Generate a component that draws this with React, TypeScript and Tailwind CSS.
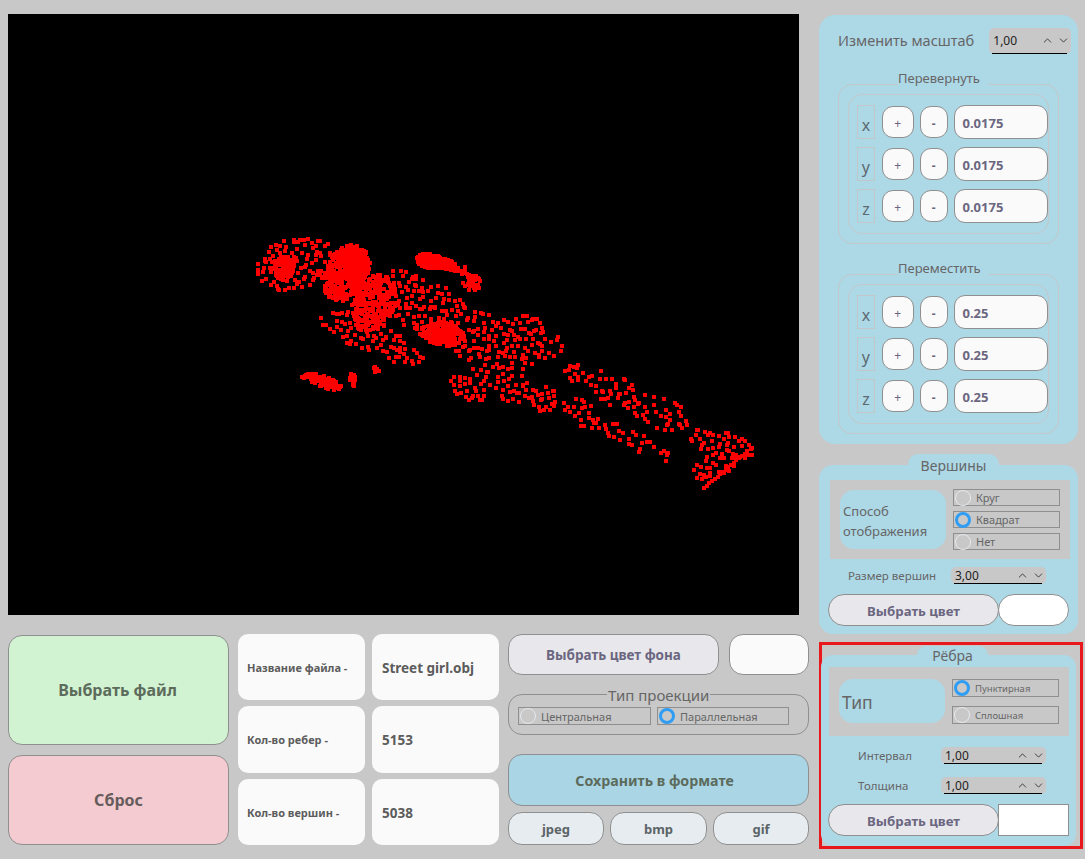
import { ChevronDown, ChevronUp } from 'lucide-react';

const FONT = 'font-["Noto_Sans",sans-serif]';

// [cx, cy, rx, ry, angle in degrees, number of points]
const BLOBS: number[][] = [
  [292, 262, 40, 26, -10, 150],
  [282, 266, 11, 12, 0, 70],
  [344, 271, 21, 30, 25, 340],
  [352, 262, 18, 16, 0, 100],
  [312, 245, 16, 7, 0, 24],
  [372, 302, 21, 30, 20, 260],
  [398, 288, 26, 20, 0, 70],
  [428, 259, 14, 8, 10, 130],
  [446, 263, 11, 5, 25, 60],
  [464, 270, 7, 5, 35, 10],
  [470, 281, 9, 8, 0, 32],
  [425, 305, 44, 26, 20, 90],
  [440, 332, 23, 12, 10, 170],
  [360, 330, 46, 16, 20, 70],
  [402, 354, 20, 9, 10, 30],
  [486, 338, 56, 26, 15, 110],
  [466, 386, 20, 12, 20, 34],
  [495, 365, 34, 20, 30, 30],
  [319, 379, 21, 6, 18, 80],
  [351, 377, 3, 8, -25, 12],
  [374, 368, 3, 5, -25, 6],
  [524, 337, 20, 24, 0, 34],
  [541, 397, 14, 13, 10, 40],
  [514, 393, 15, 9, 0, 18],
  [552, 345, 9, 15, 30, 8],
  [572, 369, 10, 10, -40, 16],
  [612, 388, 30, 16, 25, 40],
  [660, 411, 34, 17, 25, 34],
  [582, 412, 24, 12, 28, 26],
  [612, 428, 14, 9, 30, 10],
  [636, 440, 18, 10, 10, 12],
  [664, 453, 6, 8, -45, 5],
  [720, 442, 34, 13, 15, 60],
  [716, 462, 28, 12, -25, 40],
];

function buildCloud() {
  let seed = 48271;
  const rand = () => {
    seed = (seed * 16807) % 2147483647;
    return seed / 2147483647;
  };
  const taken = new Set<string>();
  const parts: string[] = [];
  for (const [cx, cy, rx, ry, deg, count] of BLOBS) {
    const a = (deg * Math.PI) / 180;
    // thin areas keep their points apart, dense ones are allowed to merge
    const sparse = count / (Math.PI * rx * ry) < 0.08;
    for (let i = 0; i < count; i++) {
      for (let attempt = 0; attempt < 6; attempt++) {
        const r = Math.sqrt(rand());
        const t = rand() * Math.PI * 2;
        const dx = Math.cos(t) * r * rx;
        const dy = Math.sin(t) * r * ry;
        const x = Math.round(cx + dx * Math.cos(a) - dy * Math.sin(a));
        const y = Math.round(cy + dx * Math.sin(a) + dy * Math.cos(a));
        const cell = `${Math.floor(x / 6)}:${Math.floor(y / 6)}`;
        if (sparse && taken.has(cell)) continue;
        taken.add(cell);
        parts.push(`M${x - 8} ${y - 14}h4v4h-4z`);
        break;
      }
    }
  }
  // ankle edge, a straight run of points
  for (let i = 0; i < 17; i++) {
    parts.push(`M${Math.round(702 + i * 2.7) - 8} ${Math.round(486 - i * 2.3) - 14}h4v4h-4z`);
  }
  return parts.join('');
}

const CLOUD = buildCloud();

function Radio({ label, checked, className, textClass }: { label: string; checked?: boolean; className: string; textClass: string }) {
  return (
    <div className={`flex items-center border border-[#8f8f8f] ${className}`}>
      <span
        className={`ml-px shrink-0 w-4 h-4 rounded-full ${checked ? 'border-[3px] border-[#2f9df4]' : 'border border-[#e6eaee]'}`}
      />
      <span className={`text-[#666] pt-[2px] ${textClass}`}>{label}</span>
    </div>
  );
}

function SpinBox({ value, className }: { value: string; className: string }) {
  return (
    <div className={`relative flex items-center justify-between bg-[#c8c8c8] rounded-[5px] pl-1 pr-[1px] ${className}`}>
      <span className="text-[12px] leading-none text-[#222]">{value}</span>
      <span className="flex items-center gap-[3px] text-[#222]">
        <ChevronUp size={13} strokeWidth={1.5} />
        <ChevronDown size={13} strokeWidth={1.5} />
      </span>
      <span className="absolute left-[3px] right-[4px] bottom-0 h-px bg-black" />
    </div>
  );
}

function AxisRow({ axis, value }: { axis: string; value: string }) {
  return (
    <div className="flex items-stretch h-[34px]">
      <div className="w-[18px] border border-[#c2c6c8] flex items-center justify-center text-[16px] text-[#5e6a72] pt-[5px]">
        {axis}
      </div>
      <button className="ml-[7px] my-px pt-[3px] w-[32px] rounded-[11px] border border-[#8f8f8f] bg-[#fafafa] text-[12px] text-[#6b6680]">
        +
      </button>
      <button className="ml-[6px] my-px pt-[3px] w-[28px] rounded-[11px] border border-[#8f8f8f] bg-[#fafafa] text-[12px] font-bold text-[#6b6680]">
        -
      </button>
      <div className="ml-[6px] w-[95px] rounded-[11px] border border-[#8f8f8f] bg-[#fafafa] flex items-center pl-[8px] pt-[3px] text-[13px] font-bold text-[#6b6680]">
        {value}
      </div>
    </div>
  );
}

function TransformGroup({ title, value }: { title: string; value: string }) {
  return (
    <div className="relative mx-[19px] h-[160px] rounded-[14px] border border-[#c4c8ca] p-[9px]">
      <span className="absolute left-[59px] -top-[16px] bg-[#add8e6] pr-[8px] h-[21px] text-[13px] leading-[18px] text-[#666]">
        {title}
      </span>
      <div className="h-full rounded-[14px] border border-[#c4c8ca] pl-[8px] pt-[10px] flex flex-col gap-[8px]">
        <AxisRow axis="x" value={value} />
        <AxisRow axis="y" value={value} />
        <AxisRow axis="z" value={value} />
      </div>
    </div>
  );
}

function InfoCell({ text, bold }: { text: string; bold?: boolean }) {
  return (
    <div
      className={`bg-[#fafafa] rounded-[10px] flex items-center pl-[9px] pt-[2px] font-bold text-[#5c5c5c] ${bold ? 'pl-[10px] text-[13.5px]' : 'text-[11px]'}`}
    >
      {text}
    </div>
  );
}

function ColorButton({ swatchClass }: { swatchClass: string }) {
  return (
    <div className="flex h-[32px] ml-[9px]">
      <button className="w-[171px] pt-[3px] rounded-[16px] border border-[#8f8f8f] bg-[#e8e8ec] text-[13.2px] font-bold text-[#6b6680]">
        Выбрать цвет
      </button>
      <div className={`w-[71px] bg-[#fff] border border-[#8f8f8f] ${swatchClass}`} />
    </div>
  );
}

export default function App() {
  return (
    <div className={`w-[1085px] h-[859px] overflow-hidden bg-[#c8c8c8] flex pl-2 ${FONT}`}>
      <div className="w-[801px] pt-[14px]">
        <div className="w-[791px] h-[601px] bg-black">
          <svg width="791" height="601" viewBox="0 0 791 601" shapeRendering="crispEdges">
            <path d={CLOUD} fill="#ff0000" />
          </svg>
        </div>

        <div className="flex mt-[19px] h-[211px]">
          <div className="w-[221px] pt-px flex flex-col gap-[10px]">
            <button className="h-[110px] pr-[2px] rounded-[14px] border border-[#8f8f8f] bg-[#d1f3d1] text-[16px] font-bold text-[#5c6b5c]">
              Выбрать файл
            </button>
            <button className="h-[90px] rounded-[14px] border border-[#8f8f8f] bg-[#f4cbd0] text-[16px] font-bold text-[#665c5c]">
              Сброс
            </button>
          </div>

          <div className="ml-[9px] w-[261px] grid grid-cols-[127px_127px] gap-x-[7px] gap-y-[6px] grid-rows-[66px_67px_66px]">
            <InfoCell text="Название файла -" />
            <InfoCell text="Street girl.obj" bold />
            <InfoCell text="Кол-во ребер -" />
            <InfoCell text="5153" bold />
            <InfoCell text="Кол-во вершин -" />
            <InfoCell text="5038" bold />
          </div>

          <div className="ml-[9px] w-[301px]">
            <div className="flex gap-[10px] h-[41px]">
              <button className="w-[211px] pt-[2px] rounded-[14px] border border-[#8f8f8f] bg-[#e8e8ec] text-[13.5px] font-bold text-[#6b6680]">
                Выбрать цвет фона
              </button>
              <div className="w-[80px] rounded-[14px] border border-[#8f8f8f] bg-[#fafafa]" />
            </div>

            <div className="relative mt-[19px] h-[41px] rounded-[14px] border border-[#8f8f8f] flex items-start pl-[9px] pt-[12px] gap-[6px]">
              <span className="absolute left-[98px] -top-[9px] bg-[#c8c8c8] px-px text-[15px] leading-[18px] text-[#666]">
                Тип проекции
              </span>
              <Radio label="Центральная" className="w-[133px] h-[18px]" textClass="ml-[5px] text-[11px]" />
              <Radio label="Параллельная" checked className="w-[132px] h-[18px]" textClass="ml-[5px] text-[11px]" />
            </div>

            <button className="mt-[19px] w-full h-[52px] pr-[8px] pt-[2px] rounded-[14px] border border-[#8f8f8f] bg-[#a9d5e5] text-[14.2px] font-bold text-[#5c6b5c]">
              Сохранить в формате
            </button>

            <div className="mt-[6px] flex gap-[6px] h-[33px]">
              <button className="w-[96px] pt-[2px] rounded-[14px] border border-[#8f8f8f] bg-[#e6ecef] text-[13px] font-bold text-[#5c6468]">
                jpeg
              </button>
              <button className="w-[97px] pt-[2px] rounded-[14px] border border-[#8f8f8f] bg-[#e6ecef] text-[13px] font-bold text-[#5c6468]">
                bmp
              </button>
              <button className="w-[96px] pt-[2px] rounded-[14px] border border-[#8f8f8f] bg-[#e6ecef] text-[13px] font-bold text-[#5c6468]">
                gif
              </button>
            </div>
          </div>
        </div>
      </div>

      <div className="ml-[10px] w-[265px] pt-[15px]">
        <div className="w-[259px] h-[429px] bg-[#add8e6] rounded-[16px] pt-[12px]">
          <div className="flex items-center h-[27px] pl-[19px]">
            <span className="text-[14.5px] text-[#666]">Изменить масштаб</span>
            <SpinBox value="1,00" className="ml-[15px] w-[82px] h-[26px]" />
          </div>
          <div className="mt-[30px]">
            <TransformGroup title="Перевернуть" value="0.0175" />
          </div>
          <div className="mt-[30px]">
            <TransformGroup title="Переместить" value="0.25" />
          </div>
        </div>

        <div className="mt-[10px] w-[259px]">
          <div className="ml-[89px] w-[91px] h-[11px] bg-[#add8e6] rounded-t-[10px] relative">
            <span className="absolute inset-x-0 top-[3px] text-center text-[14px] leading-[18px] text-[#666]">
              Вершины
            </span>
          </div>
          <div className="h-[169px] bg-[#add8e6] rounded-[14px] pt-[15px]">
            <div className="ml-[11px] w-[240px] h-[79px] bg-[#c8c8c8] flex pl-[10px] pt-[10px]">
              <div className="w-[106px] h-[59px] rounded-[14px] bg-[#add8e6] flex items-center pl-[3px] pt-[3px] text-[13px] leading-[20px] text-[#666]">
                Способ
                <br />
                отображения
              </div>
              <div className="ml-[7px] -mt-px w-[107px] flex flex-col gap-[5px]">
                <Radio label="Круг" className="h-[17px]" textClass="ml-[5px] text-[11px]" />
                <Radio label="Квадрат" checked className="h-[17px]" textClass="ml-[5px] text-[11px]" />
                <Radio label="Нет" className="h-[17px]" textClass="ml-[5px] text-[11px]" />
              </div>
            </div>
            <div className="flex items-center h-[17px] mt-[8px] pl-[29px]">
              <span className="text-[11.5px] text-[#666] w-[103px]">Размер вершин</span>
              <SpinBox value="3,00" className="w-[95px] h-[17px]" />
            </div>
            <div className="mt-[10px]">
              <ColorButton swatchClass="rounded-[16px] -ml-px" />
            </div>
          </div>
        </div>

        <div className="mt-[8px] h-[207px] w-[264px] border-[3px] border-[#e8191c]">
          <div className="ml-[95px] mt-[1px] w-[71px] h-[9px] bg-[#add8e6] rounded-t-[10px] relative">
            <span className="absolute inset-x-0 top-px text-center text-[14px] leading-[18px] text-[#666]">
              Рёбра
            </span>
          </div>
          <div className="w-[255px] h-[191px] -ml-px bg-[#add8e6] rounded-[12px] pt-[12px]">
            <div className="ml-[8px] w-[240px] h-[69px] bg-[#c8c8c8] flex pl-[10px] pt-[12px]">
              <div className="w-[106px] h-[44px] rounded-[14px] bg-[#add8e6] flex items-center pl-[3px] pt-[3px] text-[17.5px] text-[#666]">
                Тип
              </div>
              <div className="ml-[7px] w-[107px] flex flex-col gap-[9px]">
                <Radio label="Пунктирная" checked className="h-[18px]" textClass="ml-[5px] text-[9.5px]" />
                <Radio label="Сплошная" className="h-[18px]" textClass="ml-[5px] text-[9.5px]" />
              </div>
            </div>
            <div className="flex items-center h-[17px] mt-[11px] pl-[37px]">
              <span className="text-[11.5px] text-[#666] w-[83px]">Интервал</span>
              <SpinBox value="1,00" className="w-[105px] h-[17px]" />
            </div>
            <div className="flex items-center h-[17px] mt-[13px] pl-[37px]">
              <span className="text-[11.5px] text-[#666] w-[83px]">Толщина</span>
              <SpinBox value="1,00" className="w-[105px] h-[17px]" />
            </div>
            <div className="mt-[10px] -ml-[2px]">
              <ColorButton swatchClass="-ml-px" />
            </div>
          </div>
        </div>
      </div>
    </div>
  );
}
